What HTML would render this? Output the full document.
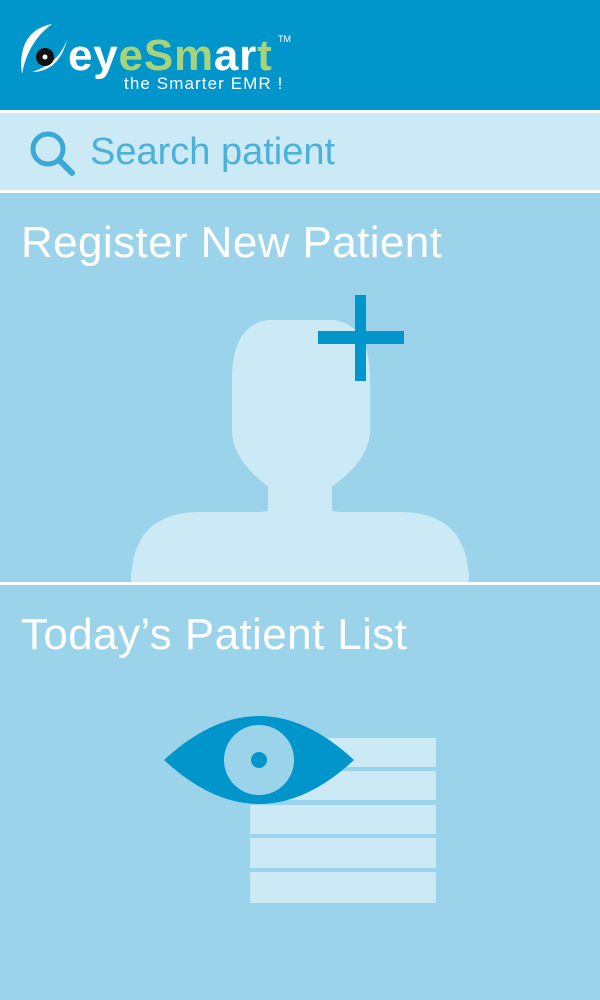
<!DOCTYPE html>
<html><head><style>
body{margin:0;width:600px;height:976px;overflow:hidden;background:#9bd4ea;font-family:"Liberation Sans",sans-serif;position:relative}
.hdr{position:absolute;left:0;top:0;width:600px;height:110px;background:#0096cc}
.sr{position:absolute;left:0;top:113px;width:600px;height:77px;background:#cceaf5}
.line{position:absolute;left:0;width:600px;height:3px;background:#fff}
.t{position:absolute;color:#fff;font-size:44px;font-weight:300;left:21px;letter-spacing:0.4px}
</style></head><body>
<div class="hdr">
<svg width="300" height="100" style="position:absolute;left:0;top:0">
<path d="M52 24 C30 28 18 45 22 74 C26 52 36 36 52 24Z" fill="#fff"/>
<path d="M32 72 C50 72 62 60 67 40 C60 57 50 66 32 72Z" fill="#fff"/>
<circle cx="45" cy="57" r="9" fill="#111"/><circle cx="45" cy="57" r="2.5" fill="#fff"/>
<text x="68" y="70" font-family="Liberation Sans" font-weight="bold" font-size="44" letter-spacing="0.8" fill="#fff">ey<tspan fill="#a8d37a">eSm</tspan>ar<tspan fill="#a8d37a">t</tspan></text>
<text x="278" y="42" font-family="Liberation Sans" font-size="9" fill="#fff">TM</text>
<text x="124" y="89" font-family="Liberation Sans" font-size="17" letter-spacing="1.1" fill="#fff">the Smarter EMR !</text>
</svg></div>
<div class="line" style="top:110px"></div>
<div class="sr">
<svg width="60" height="60" style="position:absolute;left:26px;top:12px"><circle cx="22" cy="24" r="15" fill="none" stroke="#3aa9d6" stroke-width="5"/><line x1="33" y1="35" x2="46" y2="48" stroke="#3aa9d6" stroke-width="6" stroke-linecap="round"/></svg>
<div style="position:absolute;left:90px;top:18px;font-size:38px;color:#4bb0da;font-weight:300">Search patient</div>
</div>
<div class="line" style="top:190px"></div>
<div class="t" style="top:218px">Register New Patient</div>
<svg width="600" height="400" style="position:absolute;left:0;top:190px">
<path d="M268 280 L268 320 Q268 322 258 322 L200 322 Q131 322 131 393 L469 393 Q469 322 400 322 L342 322 Q332 322 332 320 L332 280Z" fill="#cceaf5"/>
<path d="M268 130 L334 130 Q370 135 370 190 L370 240 Q370 270 330 298 L270 298 Q232 270 232 240 L232 190 Q232 135 268 130Z" fill="#cceaf5"/>
<rect x="355" y="105" width="11" height="86" fill="#0096cc"/>
<rect x="318" y="141" width="86" height="13" fill="#0096cc"/>
</svg>
<div class="line" style="top:582px"></div>
<div class="t" style="top:610px">Today’s Patient List</div>
<svg width="600" height="300" style="position:absolute;left:0;top:700px">
<g fill="#cceaf5"><rect x="250" y="38" width="186" height="29"/><rect x="250" y="71" width="186" height="29"/><rect x="250" y="105" width="186" height="29"/><rect x="250" y="138" width="186" height="30"/><rect x="250" y="172" width="186" height="31"/></g>
<path d="M164 60 Q259 -28 354 60 Q259 148 164 60Z" fill="#0096cc"/>
<circle cx="259" cy="60" r="35" fill="#9bd4ea"/><circle cx="259" cy="60" r="8" fill="#0096cc"/>
</svg>
</body></html>
